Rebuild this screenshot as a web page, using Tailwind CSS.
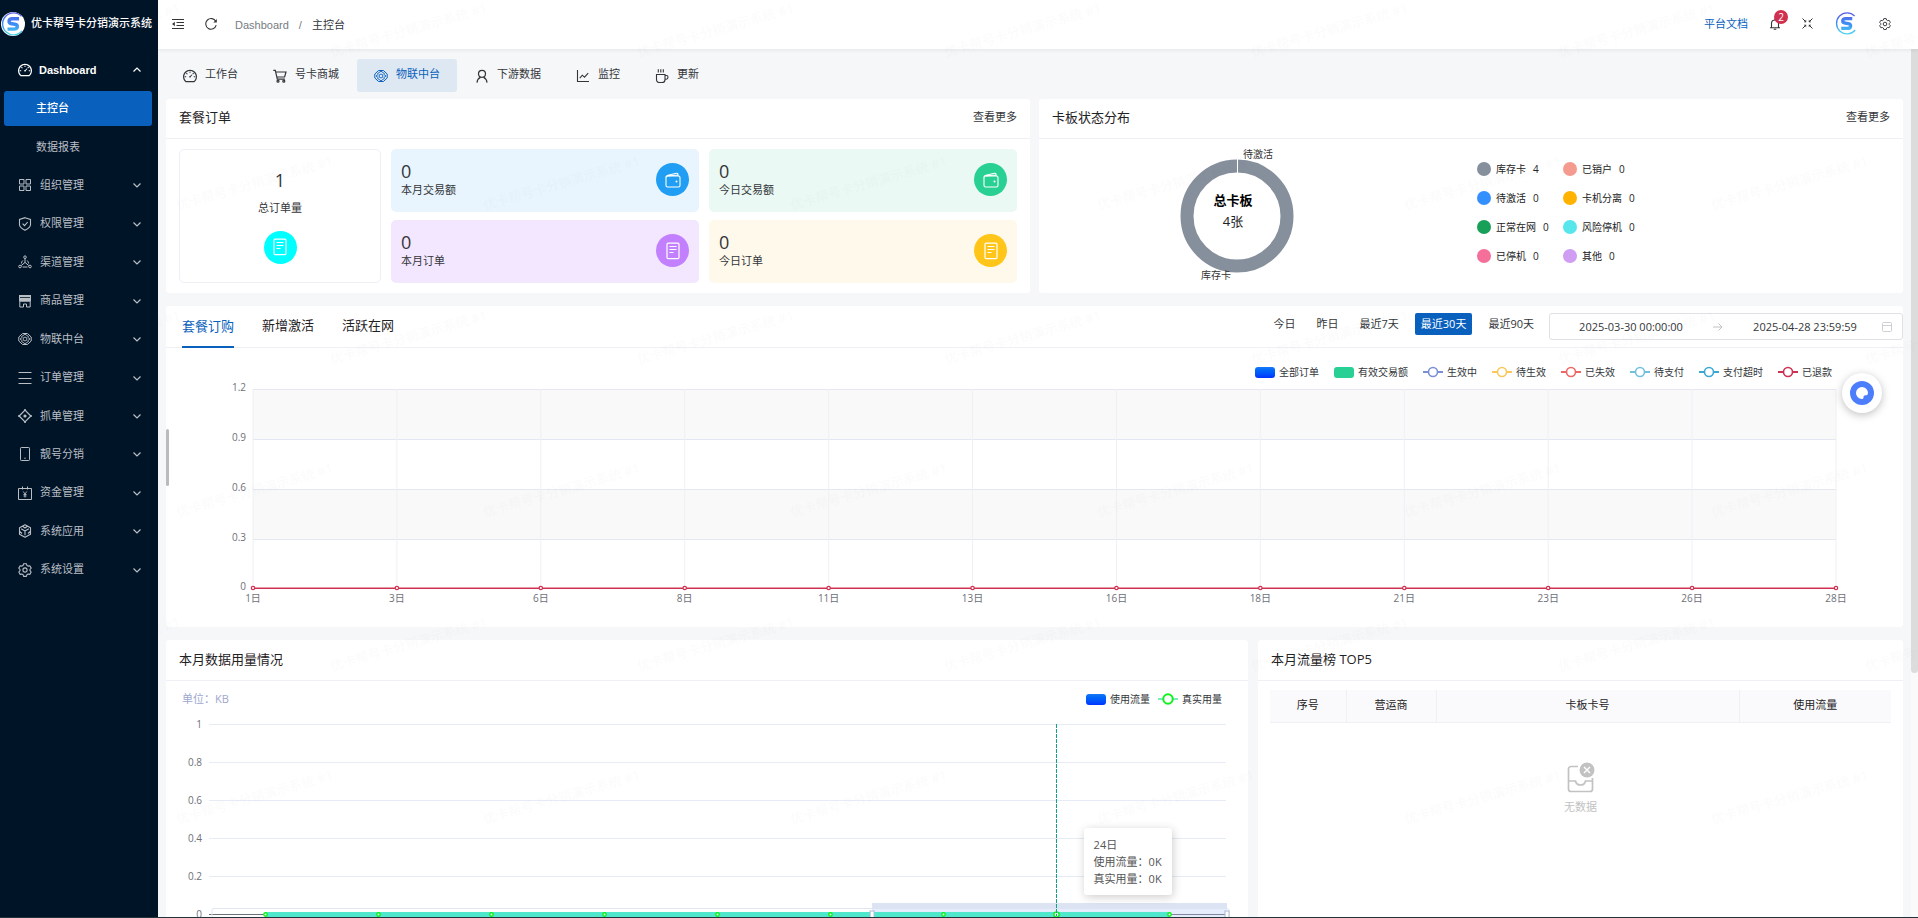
<!DOCTYPE html>
<html lang="zh-CN">
<head>
<meta charset="utf-8">
<title>优卡帮号卡分销演示系统</title>
<script src="https://cdn.jsdelivr.net/npm/@tailwindcss/browser@4"></script>
</head>
<body class="font-['Open_Sans','Noto_Sans_CJK_SC',sans-serif] text-[11px] leading-4 text-[#333639]">
<svg class="absolute size-0" aria-hidden="true">
  <defs>
    <linearGradient id="lg" gradientUnits="userSpaceOnUse" x1="0" y1="1" x2="0" y2="23"><stop offset="0" stop-color="#5b5fe8"/><stop offset=".5" stop-color="#3b8cf5"/><stop offset="1" stop-color="#4fd6ee"/></linearGradient>
    <symbol id="dash" viewBox="64 64 896 896"><path fill="currentColor" d="M924.8 385.6a446.7 446.7 0 00-96-142.4 446.7 446.7 0 00-142.4-96C631.1 123.8 572.5 112 512 112s-119.1 11.8-174.4 35.2a446.7 446.7 0 00-142.4 96 446.7 446.7 0 00-96 142.4C75.8 440.9 64 499.5 64 560c0 132.7 58.3 257.7 159.9 343.1l1.7 1.4c5.8 4.8 13.1 7.5 20.6 7.5h531.7c7.5 0 14.8-2.7 20.6-7.5l1.7-1.4C901.7 817.7 960 692.7 960 560c0-60.5-11.9-119.1-35.2-174.4zM761.4 836H262.6A371.12 371.12 0 01140 560c0-99.4 38.7-192.8 109-263 70.3-70.3 163.7-109 263-109 99.4 0 192.8 38.7 263 109 70.3 70.3 109 163.7 109 263 0 105.6-44.5 205.5-122.6 276zM623.5 421.5a8.03 8.03 0 00-11.3 0L527.7 506c-18.7-5-39.4-.2-54.1 14.5a55.95 55.95 0 000 79.2 55.95 55.95 0 0079.2 0 55.87 55.87 0 0014.5-54.1l84.5-84.5c3.1-3.1 3.1-8.2 0-11.3l-28.3-28.3zM490 320h44c4.4 0 8-3.6 8-8v-80c0-4.4-3.6-8-8-8h-44c-4.4 0-8 3.6-8 8v80c0 4.4 3.6 8 8 8zm260 218v44c0 4.4 3.6 8 8 8h80c4.4 0 8-3.6 8-8v-44c0-4.4-3.6-8-8-8h-80c-4.4 0-8 3.6-8 8zm12.7-197.2l-31.1-31.1a8.03 8.03 0 00-11.3 0l-56.6 56.6a8.03 8.03 0 000 11.3l31.1 31.1c3.1 3.1 8.2 3.1 11.3 0l56.6-56.6c3.1-3.1 3.1-8.2 0-11.3zm-458.6-31.1a8.03 8.03 0 00-11.3 0l-31.1 31.1a8.03 8.03 0 000 11.3l56.6 56.6c3.1 3.1 8.2 3.1 11.3 0l31.1-31.1c3.1-3.1 3.1-8.2 0-11.3l-56.6-56.6zM262 530h-80c-4.4 0-8 3.6-8 8v44c0 4.4 3.6 8 8 8h80c4.4 0 8-3.6 8-8v-44c0-4.4-3.6-8-8-8z"/></symbol>
    <symbol id="grid" viewBox="0 0 14 14"><path fill="none" stroke="currentColor" d="M1.5 1.5h4.5v4.5h-4.5zM8 1.5h4.5v4.5h-4.5zM1.5 8h4.5v4.5h-4.5zM8 8h4.5v4.5h-4.5z"/></symbol>
    <symbol id="shield" viewBox="0 0 14 14"><path fill="none" stroke="currentColor" stroke-width="1.1" d="M7 .7l5.500 1.800v5.200c0 2.200-2.500 4-5.500 5.600-3-1.600-5.500-3.400-5.500-5.600V2.500zM4.600 6.700l1.900 1.900 3.200-3.600"/></symbol>
    <symbol id="share" viewBox="0 0 14 14"><g fill="none" stroke="currentColor"><circle cx="7" cy="2.200" r="1.300"/><circle cx="2" cy="11.500" r="1.300"/><circle cx="12" cy="11.500" r="1.300"/><path d="M7 3.500v4M7 7.400l-3.800 3.200M7 7.400l3.800 3.200M4.500 12h5M4.800 5.500C3.900 6.300 3.500 7.300 3.400 8.500M9.200 5.500c.9.800 1.300 1.800 1.400 3"/></g></symbol>
    <symbol id="shop" viewBox="0 0 14 14"><path fill="currentColor" d="M1 1h12v5.500c0 .7-.7 1.200-1.500 1.200H2.500C1.700 7.700 1 7.200 1 6.500z"/><path fill="none" stroke="currentColor" d="M1.800 7v6h3.700v-3h3v3h3.700V7"/><path stroke="#001428" stroke-width=".8" d="M2 3.500h10"/></symbol>
    <symbol id="poly" viewBox="0 0 14 14"><g fill="none" stroke="currentColor" stroke-linejoin="round"><path d="M4.600 1.500h4.800L13.200 5v4l-3.800 3.500H4.600L.8 9V5z"/><path d="M3.200 4.800L7 2.200l3.800 2.600M3.200 9.200L7 11.800l3.800-2.600M2 7l2.500-1.800M2 7l2.500 1.800M12 7L9.500 5.200M12 7L9.500 8.800" stroke-width=".9"/><circle cx="7" cy="7" r="1.900" stroke-width=".9"/></g></symbol>
    <symbol id="menu" viewBox="0 0 14 14"><path stroke="currentColor" d="M.5 1.500h13M.5 7.500h13M.5 12.500h13"/></symbol>
    <symbol id="aim" viewBox="0 0 14 14"><path fill="none" stroke="currentColor" stroke-width="1.200" stroke-linejoin="round" d="M7 1.200L12.800 7 7 12.800 1.200 7z"/><circle cx="7" cy="7" r="1.600" fill="currentColor"/><path stroke="currentColor" stroke-width="1.400" d="M6 1h2M6 13h2M1 6v2M13 6v2"/></symbol>
    <symbol id="tablet" viewBox="0 0 14 14"><rect x="2.500" y=".5" width="9" height="13" rx=".8" fill="none" stroke="currentColor"/><circle cx="7" cy="11.200" r=".7" fill="currentColor"/></symbol>
    <symbol id="money" viewBox="0 0 14 14"><path fill="none" stroke="currentColor" d="M.5 2.500h13v11H.5zM4.500.5v3M9.500.5v3"/><path fill="none" stroke="currentColor" stroke-width=".9" d="M5.200 5.500L7 8l1.800-2.500M7 8v3.500M5.500 8.500h3M5.500 10h3"/></symbol>
    <symbol id="cube" viewBox="0 0 14 14"><path fill="none" stroke="currentColor" stroke-width="1.100" stroke-linejoin="round" d="M7 .7l5.500 3v6.600l-5.500 3-5.500-3V3.700zM3.200 4.800L7 7l3.800-2.200M7 7v4.300M4.600 2.200L7 4l2.400-1.800M1.700 7.500l2.300 2M12.300 7.500l-2.300 2"/></symbol>
    <symbol id="gear" viewBox="0 0 14 14"><g fill="none" stroke="currentColor" stroke-width="1.100" stroke-linejoin="round"><circle cx="7" cy="7" r="2.100"/><path d="M5.600.7h2.800l.5 1.700 1.200.7 1.700-.4 1.400 2.400-1.200 1.300v1.300l1.200 1.300-1.400 2.400-1.700-.4-1.200.7-.5 1.700H5.600l-.5-1.700-1.200-.7-1.700.4L.8 9l1.200-1.300V6.400L.8 5.100l1.400-2.400 1.700.4 1.200-.7z"/></g></symbol>
    <symbol id="down" viewBox="0 0 8 8"><path fill="none" stroke="currentColor" stroke-width="1.200" d="M.5 2.500L4 6l3.500-3.500"/></symbol>
    <symbol id="cart" viewBox="0 0 14 14"><g fill="none" stroke="currentColor" stroke-width="1.200"><path d="M.3 1.400h2l2 8.800h7.600M2.800 3h10.200l-1.400 5H4"/><circle cx="5" cy="12.200" r="1"/><circle cx="10.800" cy="12.200" r="1"/></g></symbol>
    <symbol id="user" viewBox="0 0 14 14"><g fill="none" stroke="currentColor" stroke-width="1.200"><circle cx="7" cy="4.800" r="3.500"/><path d="M2 13.600c.2-2.600 1.600-4.500 3.600-5.500M12 13.600c-.2-2.600-1.600-4.500-3.600-5.500"/></g></symbol>
    <symbol id="line" viewBox="0 0 14 14"><path fill="none" stroke="currentColor" stroke-width="1.100" d="M1.500 1v11.500H13M3.800 9.200l2.500-3 2.200 2 3.700-4"/></symbol>
    <symbol id="cup" viewBox="0 0 14 14"><path fill="none" stroke="currentColor" stroke-width="1.100" d="M1.500 5.500h8.500v5c0 1.700-1 3-2.700 3H4.200c-1.700 0-2.700-1.300-2.700-3zM10 6.500h1.500c1 0 1.500.7 1.500 1.800s-.7 1.900-1.700 1.900H10M3.300.3v3.200M5.800.3v3.200M8.300.3v3.200"/></symbol>
    <symbol id="wallet" viewBox="0 0 16 16"><g fill="none" stroke="currentColor" stroke-width="1.100" stroke-linejoin="round"><rect x="1" y="4" width="14" height="11" rx="1.500"/><path d="M1 5.500c0-1.300.6-2 1.800-2.200L11.500 1.300c.8-.2 1.500.3 1.500 1.200V4M2 4l11-1"/></g><circle cx="11.500" cy="9.500" r="1" fill="currentColor"/></symbol>
    <symbol id="doc" viewBox="0 0 16 18"><rect x="2" y="1.100" width="12" height="15.500" rx="1.200" fill="none" stroke="currentColor" stroke-width="1.200"/><path stroke="currentColor" stroke-width="1.200" d="M4.500 4.500h7M4.500 7.500h7M4.500 10.500h4"/></symbol>
    <symbol id="brand" viewBox="0 0 24 24"><path d="M20.500 4.200A11 11 0 1 0 21 19" fill="none" stroke="url(#lg)" stroke-width="1.400"/><path d="M18 6.800H11.200c-4 0-4.200 4.300-.5 4.900l3 .5c3.700.6 3.500 4.900-.7 4.900H6.500" fill="none" stroke="url(#lg)" stroke-width="3.400"/></symbol>
    <symbol id="mark" viewBox="0 0 20 12"><path d="M0 6h20" stroke="currentColor" stroke-width="2"/><circle cx="10" cy="6" r="4.500" fill="#fff" stroke="currentColor" stroke-width="1.600"/></symbol>
  </defs>
</svg>

<div class="relative flex h-screen overflow-hidden bg-[#f5f7f9]">
  <aside class="w-[158px] shrink-0 bg-[#001428] text-[#bbbfc4]">
    <a href="#" class="flex h-[47px] items-center gap-[6px] pl-px font-medium whitespace-nowrap text-white">
      <svg class="size-6 shrink-0 rounded-full bg-white"><use href="#brand"/></svg><span class="pb-[2px]">优卡帮号卡分销演示系统</span>
    </a>
    <nav class="mt-1 grid h-[538px] auto-rows-fr pr-[6px] pl-1">
      <button class="flex items-center gap-[7px] pr-[11px] pl-[14px] font-['Liberation_Sans'] font-bold text-white"><svg class="size-[14px]"><use href="#dash"/></svg>Dashboard<svg class="ml-auto size-2 rotate-180"><use href="#down"/></svg></button>
      <a href="#" class="my-[2px] flex items-center rounded-[3px] bg-[#0960bd] pb-[2px] pl-8 font-medium text-white">主控台</a>
      <a href="#" class="flex items-center pl-8">数据报表</a>
      <button class="flex items-center gap-2 pr-[11px] pl-[14px]"><svg class="size-[14px]"><use href="#grid"/></svg><span class="pb-px">组织管理</span><svg class="ml-auto size-2"><use href="#down"/></svg></button>
      <button class="flex items-center gap-2 pr-[11px] pl-[14px]"><svg class="size-[14px]"><use href="#shield"/></svg><span class="pb-px">权限管理</span><svg class="ml-auto size-2"><use href="#down"/></svg></button>
      <button class="flex items-center gap-2 pr-[11px] pl-[14px]"><svg class="size-[14px]"><use href="#share"/></svg><span class="pb-px">渠道管理</span><svg class="ml-auto size-2"><use href="#down"/></svg></button>
      <button class="flex items-center gap-2 pr-[11px] pl-[14px]"><svg class="size-[14px]"><use href="#shop"/></svg><span class="pb-px">商品管理</span><svg class="ml-auto size-2"><use href="#down"/></svg></button>
      <button class="flex items-center gap-2 pr-[11px] pl-[14px]"><svg class="size-[14px]"><use href="#poly"/></svg><span class="pb-px">物联中台</span><svg class="ml-auto size-2"><use href="#down"/></svg></button>
      <button class="flex items-center gap-2 pr-[11px] pl-[14px]"><svg class="size-[14px]"><use href="#menu"/></svg><span class="pb-px">订单管理</span><svg class="ml-auto size-2"><use href="#down"/></svg></button>
      <button class="flex items-center gap-2 pr-[11px] pl-[14px]"><svg class="size-[14px]"><use href="#aim"/></svg><span class="pb-px">抓单管理</span><svg class="ml-auto size-2"><use href="#down"/></svg></button>
      <button class="flex items-center gap-2 pr-[11px] pl-[14px]"><svg class="size-[14px]"><use href="#tablet"/></svg><span class="pb-px">靓号分销</span><svg class="ml-auto size-2"><use href="#down"/></svg></button>
      <button class="flex items-center gap-2 pr-[11px] pl-[14px]"><svg class="size-[14px]"><use href="#money"/></svg><span class="pb-px">资金管理</span><svg class="ml-auto size-2"><use href="#down"/></svg></button>
      <button class="flex items-center gap-2 pr-[11px] pl-[14px]"><svg class="size-[14px]"><use href="#cube"/></svg><span class="pb-px">系统应用</span><svg class="ml-auto size-2"><use href="#down"/></svg></button>
      <button class="flex items-center gap-2 pr-[11px] pl-[14px]"><svg class="size-[14px]"><use href="#gear"/></svg><span class="pb-px">系统设置</span><svg class="ml-auto size-2"><use href="#down"/></svg></button>
    </nav>
  </aside>

  <div class="flex min-w-0 flex-1 flex-col">
    <header class="z-10 flex h-[49px] shrink-0 items-center bg-white pr-[27px] pl-[14px] shadow-[0_1px_4px_rgba(0,21,41,0.08)]">
      <button aria-label="收起菜单" class="pb-[2px]"><svg class="size-3" viewBox="0 0 12 12"><path d="M0 1.500h12M4.500 4.500H12M4.500 7.500H12M0 10.500h12" stroke="#333639"/><path d="M0 6l2.800-2.200v4.400z" fill="#333639"/></svg></button>
      <button aria-label="刷新" class="ml-[21px] pb-[2px]"><svg class="size-3" viewBox="0 0 12 12"><path d="M10.800 3.500A5.300 5.300 0 1 0 11.200 7.200" fill="none" stroke="#333639" stroke-width="1.100"/><path d="M11.800 1v3.500H8.300z" fill="#333639"/></svg></button>
      <nav class="ml-[18px] flex font-['Liberation_Sans','Noto_Sans_CJK_SC']"><a href="#" class="text-[#767c82]">Dashboard</a><span class="mx-[10px] text-[#767c82]">/</span><a href="#">主控台</a></nav>
      <div class="ml-auto flex items-center pb-[2px]">
        <a href="#" class="text-[#0960bd]">平台文档</a>
        <button class="relative ml-[21px]" aria-label="通知">
          <svg class="size-3" viewBox="0 0 12 12"><path d="M2.500 9.500V5.500a3.500 3.500 0 0 1 7 0v4M1 9.700h10M6 .5v1.500M4.700 11.300h2.600" fill="none" stroke="#333639" stroke-width="1.100"/></svg>
          <span class="absolute -top-[8px] left-[5px] size-[14px] rounded-full bg-[#d03050] text-center text-[10px] leading-[14px] text-white">2</span>
        </button>
        <button class="ml-[21px]" aria-label="全屏"><svg class="size-[11px]" viewBox="0 0 11 11"><path d="M.5.500l2.800 2.800M10.500.500L7.700 3.300M.5 10.500l2.800-2.800M10.500 10.500L7.700 7.700" fill="none" stroke="#333639"/><path d="M4.200 1.800v2.400H1.800zM6.800 1.800v2.400h2.400zM4.200 9.200V6.800H1.800zM6.800 9.200V6.800h2.400z" fill="#333639"/></svg></button>
        <button class="ml-[22px]" aria-label="账户"><svg class="size-[23px]"><use href="#brand"/></svg></button>
        <button class="ml-[21px]" aria-label="设置"><svg class="size-3"><use href="#gear"/></svg></button>
      </div>
    </header>

    <main class="relative min-h-0 flex-1 overflow-hidden pt-[10px] pr-[15px] pl-2">
      <div class="mb-[7px] flex gap-px">
        <button class="flex h-[33px] items-center gap-2 rounded-[3px] px-[17px]"><svg class="size-[14px]"><use href="#dash"/></svg><span class="pb-[3px]">工作台</span></button>
        <button class="flex h-[33px] items-center gap-2 rounded-[3px] px-[17px]"><svg class="size-[14px]"><use href="#cart"/></svg><span class="pb-[3px]">号卡商城</span></button>
        <button class="flex h-[33px] items-center gap-2 rounded-[3px] bg-[#dee8f2] px-[17px] text-[#0960bd]"><svg class="size-[14px]"><use href="#poly"/></svg><span class="pb-[3px]">物联中台</span></button>
        <button class="flex h-[33px] items-center gap-2 rounded-[3px] px-[17px]"><svg class="size-[14px]"><use href="#user"/></svg><span class="pb-[3px]">下游数据</span></button>
        <button class="flex h-[33px] items-center gap-2 rounded-[3px] px-[17px]"><svg class="size-[14px]"><use href="#line"/></svg><span class="pb-[3px]">监控</span></button>
        <button class="flex h-[33px] items-center gap-2 rounded-[3px] px-[17px]"><svg class="size-[14px]"><use href="#cup"/></svg><span class="pb-[3px]">更新</span></button>
      </div>

      <div class="grid grid-cols-2 gap-[9px]">
        <section class="rounded-[3px] bg-white">
          <div class="flex h-10 items-center justify-between border-b border-[#efeff5] px-[13px] pb-[3px]"><h2 class="text-[13px] text-[#1f2225]">套餐订单</h2><a href="#">查看更多</a></div>
          <div class="grid grid-cols-[202fr_308fr_308fr] gap-x-[10px] gap-y-2 px-[13px] py-[10px]">
            <div class="row-span-2 flex flex-col items-center justify-center rounded-[5px] border border-[#efeff5] pb-px">
              <b class="text-[18px] leading-6 font-normal">1</b><span class="mt-2">总订单量</span>
              <span class="mt-[15px] flex size-[33px] items-center justify-center rounded-full bg-[#00ffff] text-white"><svg class="h-[18px] w-4"><use href="#doc"/></svg></span>
            </div>
            <div class="flex h-[63px] items-center justify-between rounded-[5px] bg-[#e9f5fe] px-[10px] pb-[2px]"><div><b class="block pb-px text-[18px] leading-5 font-normal">0</b>本月交易额</div><span class="flex size-[33px] items-center justify-center rounded-full bg-[#1f9ef3] text-white"><svg class="size-4"><use href="#wallet"/></svg></span></div>
            <div class="flex h-[63px] items-center justify-between rounded-[5px] bg-[#ebf9f4] px-[10px] pb-[2px]"><div><b class="block pb-px text-[18px] leading-5 font-normal">0</b>今日交易额</div><span class="flex size-[33px] items-center justify-center rounded-full bg-[#29d093] text-white"><svg class="size-4"><use href="#wallet"/></svg></span></div>
            <div class="flex h-[63px] items-center justify-between rounded-[5px] bg-[#f3e7ff] px-[10px] pb-[2px]"><div><b class="block pb-px text-[18px] leading-5 font-normal">0</b>本月订单</div><span class="flex size-[33px] items-center justify-center rounded-full bg-[#c280ff] text-white"><svg class="h-[18px] w-4"><use href="#doc"/></svg></span></div>
            <div class="flex h-[63px] items-center justify-between rounded-[5px] bg-[#fff9eb] px-[10px] pb-[2px]"><div><b class="block pb-px text-[18px] leading-5 font-normal">0</b>今日订单</div><span class="flex size-[33px] items-center justify-center rounded-full bg-[#ffc619] text-white"><svg class="h-[18px] w-4"><use href="#doc"/></svg></span></div>
          </div>
        </section>

        <section class="flex flex-col rounded-[3px] bg-white">
          <div class="flex h-10 shrink-0 items-center justify-between border-b border-[#efeff5] px-[13px] pb-[3px]"><h2 class="text-[13px] text-[#1f2225]">卡板状态分布</h2><a href="#">查看更多</a></div>
          <div class="flex flex-1 items-center">
            <div class="flex w-[395px] justify-center">
              <svg class="h-[150px] w-[200px]" viewBox="0 0 200 150">
                <circle cx="100" cy="75" r="50" fill="none" stroke="#868f9c" stroke-width="13"/>
                <path d="M100.500 17v15" stroke="#fff"/>
                <text x="96" y="64" text-anchor="middle" font-size="13" font-weight="700" fill="#000">总卡板</text>
                <text x="96" y="85" text-anchor="middle" font-size="13" fill="#222">4张</text>
                <text x="106" y="17" font-size="10" fill="#333">待激活</text>
                <text x="94" y="138" text-anchor="end" font-size="10" fill="#333">库存卡</text>
              </svg>
            </div>
            <ul class="ml-[43px] grid grid-cols-[86px_auto] gap-y-[13px] pb-[7px] text-[10px] text-[#222]">
              <li class="flex items-center gap-[5px]"><i class="size-[14px] rounded-full bg-[#868f9c]"></i>库存卡<span class="ml-[2px]">4</span></li>
              <li class="flex items-center gap-[5px]"><i class="size-[14px] rounded-full bg-[#f59a8f]"></i>已销户<span class="ml-[2px]">0</span></li>
              <li class="flex items-center gap-[5px]"><i class="size-[14px] rounded-full bg-[#3590ff]"></i>待激活<span class="ml-[2px]">0</span></li>
              <li class="flex items-center gap-[5px]"><i class="size-[14px] rounded-full bg-[#ffb300]"></i>卡机分离<span class="ml-[2px]">0</span></li>
              <li class="flex items-center gap-[5px]"><i class="size-[14px] rounded-full bg-[#18a058]"></i>正常在网<span class="ml-[2px]">0</span></li>
              <li class="flex items-center gap-[5px]"><i class="size-[14px] rounded-full bg-[#56e6ec]"></i>风险停机<span class="ml-[2px]">0</span></li>
              <li class="flex items-center gap-[5px]"><i class="size-[14px] rounded-full bg-[#f4709b]"></i>已停机<span class="ml-[2px]">0</span></li>
              <li class="flex items-center gap-[5px]"><i class="size-[14px] rounded-full bg-[#cf9df2]"></i>其他<span class="ml-[2px]">0</span></li>
            </ul>
          </div>
        </section>
      </div>

      <section class="mt-[13px] rounded-[3px] bg-white pb-[39px]">
        <div class="flex h-[42px] items-center border-b border-[#efeff5] pl-4">
          <div class="flex gap-7 self-stretch text-[13px] text-[#1f2225]">
            <button class="-mb-px border-b-2 border-[#0960bd] pb-px text-[#0960bd]">套餐订购</button>
            <button class="-mb-px border-b-2 border-transparent pb-[2px]">新增激活</button>
            <button class="-mb-px border-b-2 border-transparent pb-[2px]">活跃在网</button>
          </div>
          <div class="ml-auto flex items-center gap-[10px]">
            <div class="flex gap-[11px] pb-[5px]">
              <button class="h-[22px] px-[5px]">今日</button>
              <button class="h-[22px] px-[5px]">昨日</button>
              <button class="h-[22px] px-[5px]">最近7天</button>
              <button class="h-[22px] rounded-[2px] bg-[#0960bd] px-[6px] text-white">最近30天</button>
              <button class="h-[22px] px-[5px]">最近90天</button>
            </div>
            <div class="flex h-[27px] w-[354px] items-center rounded-[3px] border border-[#e0e0e6] pr-[10px] pl-1">
              <input aria-label="开始日期" class="min-w-0 flex-1 text-center" value="2025-03-30 00:00:00">
              <svg class="mx-1 size-3" viewBox="0 0 12 12"><path d="M1 6h9M6.500 2.500L10 6 6.500 9.500" fill="none" stroke="#c2c2c2"/></svg>
              <input aria-label="结束日期" class="min-w-0 flex-1 text-center" value="2025-04-28 23:59:59">
              <svg class="size-[10px]" viewBox="0 0 10 10"><path d="M.5 1.500a1 1 0 0 1 1-1h7a1 1 0 0 1 1 1v7a1 1 0 0 1-1 1h-7a1 1 0 0 1-1-1zM.5 3.500h9" fill="none" stroke="#c9c9cf" stroke-width=".9"/></svg>
            </div>
          </div>
        </div>
        <ul class="mt-[17px] flex h-[14px] items-center justify-end gap-[15px] pr-[71px] text-[10px] leading-[14px]">
          <li class="flex items-center gap-1"><i class="h-[11px] w-5 rounded-[3px] bg-linear-to-b from-[#1778f5] to-[#0032ff]"></i>全部订单</li>
          <li class="flex items-center gap-1"><i class="h-[11px] w-5 rounded-[3px] bg-[#29d093]"></i>有效交易额</li>
          <li class="flex items-center gap-1 text-[#7b8fd4]"><svg class="h-3 w-5"><use href="#mark"/></svg><span class="text-[#333639]">生效中</span></li>
          <li class="flex items-center gap-1 text-[#fac858]"><svg class="h-3 w-5"><use href="#mark"/></svg><span class="text-[#333639]">待生效</span></li>
          <li class="flex items-center gap-1 text-[#ee6666]"><svg class="h-3 w-5"><use href="#mark"/></svg><span class="text-[#333639]">已失效</span></li>
          <li class="flex items-center gap-1 text-[#73c0de]"><svg class="h-3 w-5"><use href="#mark"/></svg><span class="text-[#333639]">待支付</span></li>
          <li class="flex items-center gap-1 text-[#3ba8d4]"><svg class="h-3 w-5"><use href="#mark"/></svg><span class="text-[#333639]">支付超时</span></li>
          <li class="flex items-center gap-1 text-[#d03050]"><svg class="h-3 w-5"><use href="#mark"/></svg><span class="text-[#333639]">已退款</span></li>
        </ul>
        <div class="mt-[10px] mr-[67px] ml-[87px]"><svg id="orders" class="block h-[199px] w-full overflow-visible text-[10px]"></svg></div>
      </section>

      <div class="mt-[13px] grid grid-cols-[1082fr_645fr] gap-[10px]">
        <section class="h-[340px] rounded-[3px] bg-white">
          <div class="flex h-[41px] items-center border-b border-[#efeff5] px-[13px] pb-[3px] text-[#1f2225]"><h2 class="text-[13px]">本月数据用量情况</h2></div>
          <div class="mt-[10px] flex items-center pr-[26px] pl-4">
            <span class="text-[#a0a7cf]">单位：KB</span>
            <ul class="ml-auto flex items-center gap-2 text-[10px]">
              <li class="flex items-center gap-1"><i class="h-[11px] w-5 rounded-[3px] bg-linear-to-b from-[#1778f5] to-[#0032ff]"></i>使用流量</li>
              <li class="flex items-center gap-1"><svg class="h-3 w-5" viewBox="0 0 20 12"><path d="M0 6h20" stroke="#4be8a8" stroke-width="1.500"/><circle cx="10" cy="6" r="4.700" fill="#fff" stroke="#0df21a" stroke-width="2"/></svg>真实用量</li>
            </ul>
          </div>
          <div class="relative mt-[17px] mr-[22px] ml-[43px]">
            <svg id="usage" class="block h-[215px] w-full overflow-visible text-[10px]"></svg>
            <div class="absolute top-[104px] left-[86%] rounded-[3px] bg-white px-[10px] py-2 leading-[17px] whitespace-nowrap text-[#555] shadow-[1px_2px_10px_rgba(0,0,0,0.2)]">24日<br>使用流量：0K<br>真实用量：0K</div>
          </div>
        </section>
        <section class="h-[340px] rounded-[3px] bg-white">
          <div class="flex h-[41px] items-center border-b border-[#efeff5] px-[13px] pb-[3px] text-[#1f2225]"><h2 class="text-[13px]">本月流量榜 TOP5</h2></div>
          <div class="px-[12px] pt-[9px]">
            <table class="w-full table-fixed border-collapse text-[#1f2225]">
              <colgroup><col class="w-[76px]"><col class="w-[90px]"><col><col class="w-[152px]"></colgroup>
              <thead><tr class="h-8 border-b border-[#efeff5] bg-[#fafafc]"><th class="border-r border-[#efeff5] pb-[2px] font-normal">序号</th><th class="border-r border-[#efeff5] pb-[2px] font-normal">营运商</th><th class="border-r border-[#efeff5] pb-[2px] font-normal">卡板卡号</th><th class="pb-[2px] font-normal">使用流量</th></tr></thead>
              <tbody><tr><td colspan="4" class="pt-[39px] text-center text-[#c2c2c2]">
                <svg class="mx-auto mb-[6px] h-[31px] w-7" viewBox="0 0 28 31"><path d="M11 4.500H4a2.500 2.500 0 0 0-2.500 2.500v20A2.500 2.500 0 0 0 4 29.500h19a2.500 2.500 0 0 0 2.500-2.500V16M1.500 19h7c.5 2.500 2.500 4 5 4s4.500-1.500 5-4h7" fill="none" stroke="#c2c2c2" stroke-width="1.700"/><circle cx="20" cy="8" r="7.500" fill="#c2c2c2"/><path d="M17 5l6 6M23 5l-6 6" stroke="#fff" stroke-width="1.400"/></svg>
                无数据</td></tr></tbody>
            </table>
          </div>
        </section>
      </div>

      <div class="absolute top-[380px] left-2 h-[57px] w-[3px] rounded-full bg-[#bbb]"></div>
      <button aria-label="客服" class="absolute top-[324px] right-9 flex size-10 items-center justify-center rounded-full bg-white shadow-[0_2px_8px_rgba(0,0,0,0.25)]"><svg class="size-6" viewBox="0 0 24 24"><circle cx="12" cy="12" r="12" fill="#4c7dfb"/><path d="M12 6a6 6 0 1 0 0 12c1 0 1.500-.6 1.500-1.500 0-1.500.6-2.200 2-2.200 1.600 0 2.500-.9 2.500-2.300a6 6 0 0 0-6-6z" fill="#fff"/></svg></button>
      <div class="absolute inset-y-0 right-0 w-[7px] bg-[#fafafa]"><div class="h-[624px] rounded-b-[4px] bg-[#dcdcdc]"></div></div>
    </main>
  </div>

  <div class="absolute inset-x-0 bottom-0 h-px bg-[#22333a]"></div>
  <svg class="pointer-events-none absolute inset-0 z-50 h-full w-full" aria-hidden="true">
    <defs><pattern id="wm" width="307" height="307" patternUnits="userSpaceOnUse"><g font-size="13" fill="#000" fill-opacity=".016"><text transform="translate(25 57) rotate(-16)">优卡帮号卡分销演示系统 #1</text><text transform="translate(178 210) rotate(-16)">优卡帮号卡分销演示系统 #1</text><text transform="translate(-129 210) rotate(-16)">优卡帮号卡分销演示系统 #1</text></g></pattern></defs>
    <rect width="100%" height="100%" fill="url(#wm)"/>
  </svg>
</div>

<script>
  const line = (x1, y1, x2, y2, c, extra = '') => `<line x1="${x1}" y1="${y1}" x2="${x2}" y2="${y2}" stroke="${c}" ${extra}/>`;

  // Order trend: five value ticks, twelve day ticks, every series at zero.
  const days = ['1日','3日','6日','8日','11日','13日','16日','18日','21日','23日','26日','28日'];
  let s = '<rect width="100%" height="50" fill="#f9f9f9"/><rect y="100" width="100%" height="50" fill="#f9f9f9"/>';
  ['1.2','0.9','0.6','0.3','0'].forEach((t, i) => {
    const y = i * 50 + 0.5 - (i > 3 ? 1 : 0);
    s += line(0, y, '100%', y, '#e4e7f1') + `<text x="-7" y="${y + 1}" text-anchor="end" fill="#6e7079">${t}</text>`;
  });
  days.forEach((t, i) => { const x = i / 11 * 100 + '%'; s += line(x, 0, x, 199, '#eef0f4'); });
  s += line(0, 199, '100%', 199, '#eb9aaa', 'stroke-width="2"') + line(0, 199.5, '100%', 199.5, '#d03050', 'stroke-width="1"');
  days.forEach((t, i) => {
    const x = i / 11 * 100 + '%';
    s += `<circle cx="${x}" cy="199" r="1.700" fill="#fff" stroke="#d03050" stroke-width="1.200"/><text x="${x}" y="213" text-anchor="middle" fill="#6e7079">${t}</text>`;
  });
  document.getElementById('orders').innerHTML = s;

  // Data usage: nine categories with the zoom slider over the baseline.
  let u = '';
  ['1','0.8','0.6','0.4','0.2','0'].forEach((t, i) => {
    const y = i * 38 + 0.5;
    u += line(0, y, '100%', y, i < 5 ? '#e6ebf5' : '#6e7079') + `<text x="-7" y="${y + 3}" text-anchor="end" fill="#6e7079">${t}</text>`;
  });
  u += '<rect x="3" y="184.500" width="100%" height="24" rx="2" fill="none" stroke="#e0e6f1"/>';
  u += '<rect x="65.2%" y="179" width="34.9%" height="6" fill="#dce4f4"/><rect x="65.2%" y="185" width="34.9%" height="24" fill="#e5ecfb"/>';
  u += line('94.4%', 190.5, '100%', 190.5, '#8088a0');
  u += '<rect x="5.55%" y="188" width="88.9%" height="5" fill="#4fe8cd"/>';
  for (let i = 0; i < 9; i++) u += `<circle cx="${(i + .5) / 9 * 100}%" cy="190.500" r="${i === 7 ? 2.600 : 1.700}" fill="#dfffe0" stroke="#0df21a" stroke-width="1.400"/>`;
  u += line('83.3%', 0, '83.3%', 192, '#12a288', 'stroke-dasharray="4 1" shape-rendering="crispEdges"');
  u += '<svg x="65.2%" overflow="visible"><rect x="-2" y="187" width="4" height="10" fill="#fff" stroke="#acb8d1"/></svg><svg x="100%" overflow="visible"><rect x="-1" y="187" width="4" height="10" fill="#fff" stroke="#acb8d1"/></svg>';
  document.getElementById('usage').innerHTML = u;
</script>
</body>
</html>
